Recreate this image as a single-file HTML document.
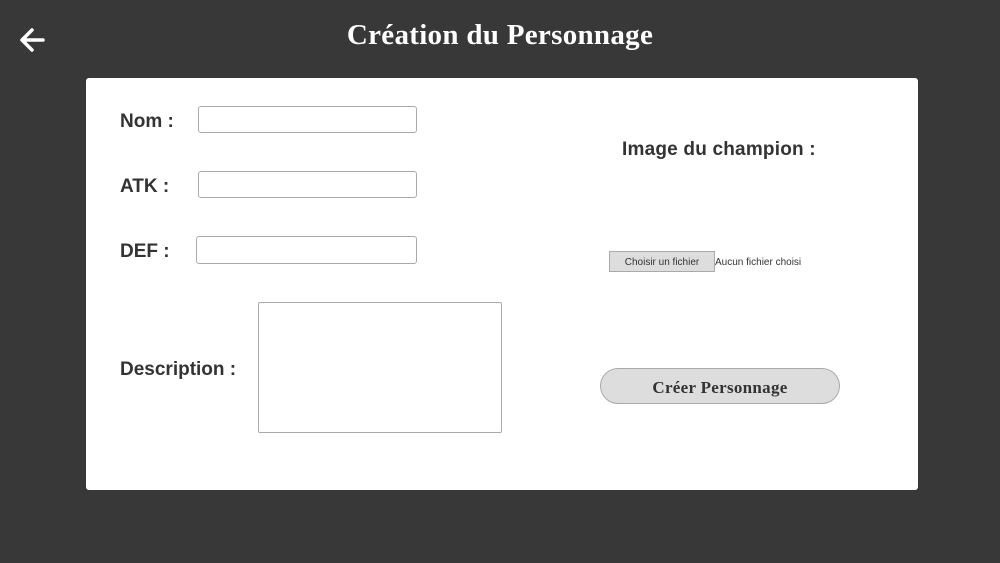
<!DOCTYPE html>
<html><head><meta charset="utf-8"><style>
*{box-sizing:border-box;margin:0;padding:0}
body{width:1000px;height:563px;background:#383838;position:relative;overflow:hidden;font-family:"Liberation Sans",sans-serif}
.abs{position:absolute}
h1{position:absolute;left:0;width:1000px;top:19px;text-align:center;color:#fff;font-family:"Liberation Serif",serif;font-weight:bold;font-size:29px;letter-spacing:0.3px}
.card{left:86px;top:78px;width:832px;height:412px;background:#fff;border-radius:3px}
.lbl{position:absolute;font-weight:bold;font-size:19px;color:#333}
.in{position:absolute;border:1px solid #aaa;border-radius:3px;background:#fff}
</style></head><body>
<svg class="abs" style="left:18px;top:26px" width="28" height="28" viewBox="0 0 28 28"><path d="M25 14H4M14 4L4 14l10 10" stroke="#fff" stroke-width="3.5" fill="none" stroke-linecap="round" stroke-linejoin="round"/></svg>
<h1>Création du Personnage</h1>
<div class="abs card"></div>
<div class="lbl" style="left:120px;top:111px">Nom :</div>
<div class="in" style="left:198px;top:106px;width:219px;height:27px"></div>
<div class="lbl" style="left:120px;top:176px">ATK :</div>
<div class="in" style="left:198px;top:171px;width:219px;height:27px"></div>
<div class="lbl" style="left:120px;top:241px">DEF :</div>
<div class="in" style="left:196px;top:236px;width:221px;height:28px"></div>
<div class="lbl" style="left:120px;top:359px">Description :</div>
<div class="in" style="left:258px;top:302px;width:244px;height:131px;border-radius:2px"></div>
<div class="lbl" style="left:622px;top:139px;letter-spacing:0.2px">Image du champion :</div>
<div class="abs" style="left:609px;top:251px;width:106px;height:21px;background:#ddd;border:1px solid #aaa;font-size:10px;color:#333;text-align:center;line-height:21px">Choisir un fichier</div>
<div class="abs" style="left:715px;top:257px;font-size:10px;color:#333">Aucun fichier choisi</div>
<div class="abs" style="left:600px;top:368px;width:240px;height:36px;background:#ddd;border:1px solid #aaa;border-radius:18px;text-align:center;line-height:38px;font-family:'Liberation Serif',serif;font-weight:bold;font-size:17px;letter-spacing:0.3px;color:#333">Créer Personnage</div>
</body></html>
